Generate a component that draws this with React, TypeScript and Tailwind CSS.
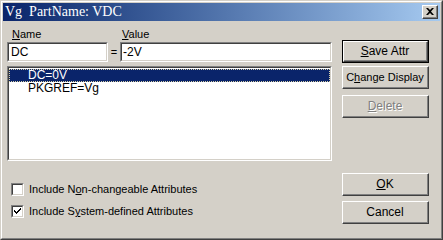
import React from 'react'

const font = { fontFamily: '"Liberation Sans", Arial, sans-serif' }

const Btn = ({ children, def = false, disabled = false }: { children: React.ReactNode; def?: boolean; disabled?: boolean }) => (
    <div className={`h-[23px] w-[87px] ${def ? 'border border-black' : ''}`}>
        <div className="h-full w-full border-t border-l border-white border-r border-b border-r-[#404040] border-b-[#404040]">
            <div className={`h-full w-full flex items-center justify-center border-r border-b border-[#808080] text-[11px] whitespace-nowrap ${disabled ? 'text-[#808080] [text-shadow:1px_1px_0_#fff]' : 'text-black'}`}>
                {children}
            </div>
        </div>
    </div>
)

const Sunken = ({ className, children }: { className: string; children?: React.ReactNode }) => (
    <div className={`border-t border-l border-[#808080] border-r border-b border-r-white border-b-white ${className}`}>
        <div className="h-full w-full border-t border-l border-[#404040] border-r border-b border-r-[#d4d0c8] border-b-[#d4d0c8] bg-white overflow-hidden">
            {children}
        </div>
    </div>
)

const Check = ({ checked, children }: { checked: boolean; children: React.ReactNode }) => (
    <div className="flex items-center h-[13px] gap-[5px]">
        <div className="w-[13px] h-[13px] border-t border-l border-[#808080] border-r border-b border-r-white border-b-white">
            <div className="w-full h-full border-t border-l border-[#404040] border-r border-b border-r-[#d4d0c8] border-b-[#d4d0c8] bg-white">
                {checked && (
                    <svg width="9" height="9" viewBox="0 0 9 9" className="block">
                        <path d="M1 3h1v1h1v1h1V4h1V3h1V2h1V1h1v2H7v1H6v1H5v1H4v1H3V6H2V5H1z" fill="#000" />
                    </svg>
                )}
            </div>
        </div>
        <span className="text-[11px] text-black">{children}</span>
    </div>
)

export default function App() {
    return (
        <div style={font} className="w-[443px] h-[240px] border-t border-l border-[#d4d0c8] border-r border-b border-r-[#404040] border-b-[#404040]">
            <div className="w-full h-full border-t border-l border-white border-r border-b border-r-[#808080] border-b-[#808080] bg-[#d4d0c8] p-px flex flex-col">
                {/* title bar */}
                <div className="h-[18px] shrink-0 bg-gradient-to-r from-[#0a246a] to-[#a6caf0] flex items-center pl-[2px] pr-[2px]">
                    <span className="text-white text-[14px] leading-none whitespace-pre" style={{ fontFamily: '"Liberation Serif", "Times New Roman", serif' }}>
                        Vg  PartName: VDC
                    </span>
                    <div className="ml-auto w-[16px] h-[14px] border-t border-l border-white border-r border-b border-r-[#404040] border-b-[#404040] bg-[#d4d0c8]">
                        <div className="w-full h-full border-r border-b border-[#808080] flex items-center justify-center">
                            <svg width="8" height="7" viewBox="0 0 8 7" className="block">
                                <path d="M0 0h2l2 2 2-2h2L5 3.5 8 7H6L4 5 2 7H0l3-3.5z" fill="#000" />
                            </svg>
                        </div>
                    </div>
                </div>

                {/* body */}
                <div className="flex flex-1 pl-[4px]">
                    <div className="w-[325px] flex flex-col">
                        <div className="flex h-[13px] mt-[5px] text-[11px] text-black">
                            <span className="w-[113px] pl-[5px]"><u>N</u>ame</span>
                            <span className="pl-[2px]"><u>V</u>alue</span>
                        </div>
                        <div className="flex items-center mt-[3px] h-[20px]">
                            <Sunken className="w-[101px] h-[20px]">
                                <div className="text-[12px] leading-[16px] pl-[2px] text-black">DC</div>
                            </Sunken>
                            <span className="w-[12px] text-center text-[11px] text-black">=</span>
                            <Sunken className="w-[212px] h-[20px]">
                                <div className="text-[12px] leading-[16px] pl-[1px] text-black">-2V</div>
                            </Sunken>
                        </div>
                        <Sunken className="w-[325px] h-[95px] mt-[4px]">
                            <div className="pt-px text-[12px] leading-[13px]">
                                <div className="h-[13px] bg-[#0a246a] text-white pl-[18px] border border-dotted border-[#d8d0a8] leading-[11px]">DC=0V</div>
                                <div className="h-[13px] text-black pl-[19px]">PKGREF=Vg</div>
                            </div>
                        </Sunken>
                        <div className="flex flex-col gap-[9px] mt-[22px] pl-[4px]">
                            <Check checked={false}>Include N<u>o</u>n-changeable Attributes</Check>
                            <Check checked={true}>Include S<u>y</u>stem-defined Attributes</Check>
                        </div>
                    </div>
                    <div className="ml-[10px] flex flex-col">
                        <div className="mt-[19px]">
                            <Btn def><span className="text-[12px]"><u>S</u>ave Attr</span></Btn>
                        </div>
                        <div className="mt-[3px]">
                            <Btn>C<u>h</u>ange Display</Btn>
                        </div>
                        <div className="mt-[6px]">
                            <Btn disabled><span className="text-[12px]"><u>D</u>elete</span></Btn>
                        </div>
                        <div className="mt-[55px]">
                            <Btn><span className="text-[12px]"><u>O</u>K</span></Btn>
                        </div>
                        <div className="mt-[5px]">
                            <Btn><span className="text-[12px]">Cancel</span></Btn>
                        </div>
                    </div>
                </div>
            </div>
        </div>
    )
}
